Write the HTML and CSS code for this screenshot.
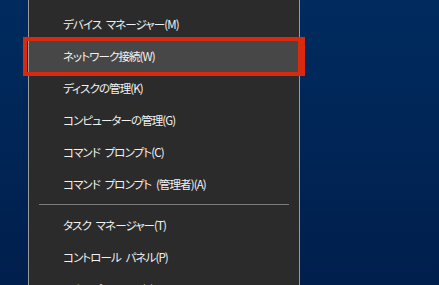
FILE: index.html
```html
<!DOCTYPE html>
<html>
<head>
  <title>クイック リンク メニュー</title>
  <link rel="stylesheet" href="styles.css">
</head>
<body>
  <div class="desktop">
    <!-- Win+X メニュー -->
    <div class="menu">
      <div class="item">デバイス マネージャー(M)</div>
      <div class="item active">ネットワーク接続(W)</div>
      <div class="item">ディスクの管理(K)</div>
      <div class="item">コンピューターの管理(G)</div>
      <div class="item">コマンド プロンプト(C)</div>
      <div class="item">コマンド プロンプト (管理者)(A)</div>
      <div class="separator"></div>
      <div class="item">タスク マネージャー(T)</div>
      <div class="item">コントロール パネル(P)</div>
      <div class="item">エクスプローラー(E)</div>
    </div>

    <!-- 赤い枠 (注釈) -->
    <div class="highlight-box"></div>
  </div>
</body>
</html>
```

FILE: styles.css
```css
/* ページ全体: 青いデスクトップ */
body {
  margin: 0;
  height: 285px;
  overflow: hidden;
  background: linear-gradient(#002b5f, #001f4d);
  font-family: "Noto Sans CJK JP", "Noto Sans", sans-serif;
}

.desktop {
  position: relative;
  height: 100%;
  display: flex;
}

/* メニュー本体 */
.menu {
  margin-left: 28px;
  width: 270px;
  padding-top: 8px;
  background-color: #2b2b2b;
  border-left: 1px solid #9a9a9a;
  border-right: 1px solid #9a9a9a;
}

.item {
  height: 32px;
  line-height: 32px;
  padding-left: 34px;
  color: #f2f2f2;
  font-size: 11.5px;
  letter-spacing: -0.9px;
  word-spacing: 3px;
  font-feature-settings: "palt";
  white-space: nowrap;
}

.item.active {
  background-color: #474747;
}

.separator {
  height: 1px;
  margin: 4px 10px;
  background-color: #7c7c7c;
}

/* 注釈の赤枠 */
.highlight-box {
  position: absolute;
  left: 23px;
  top: 37px;
  width: 271px;
  height: 31px;
  border: 4px solid #d9290f;
  border-right-width: 7px;
}
```
